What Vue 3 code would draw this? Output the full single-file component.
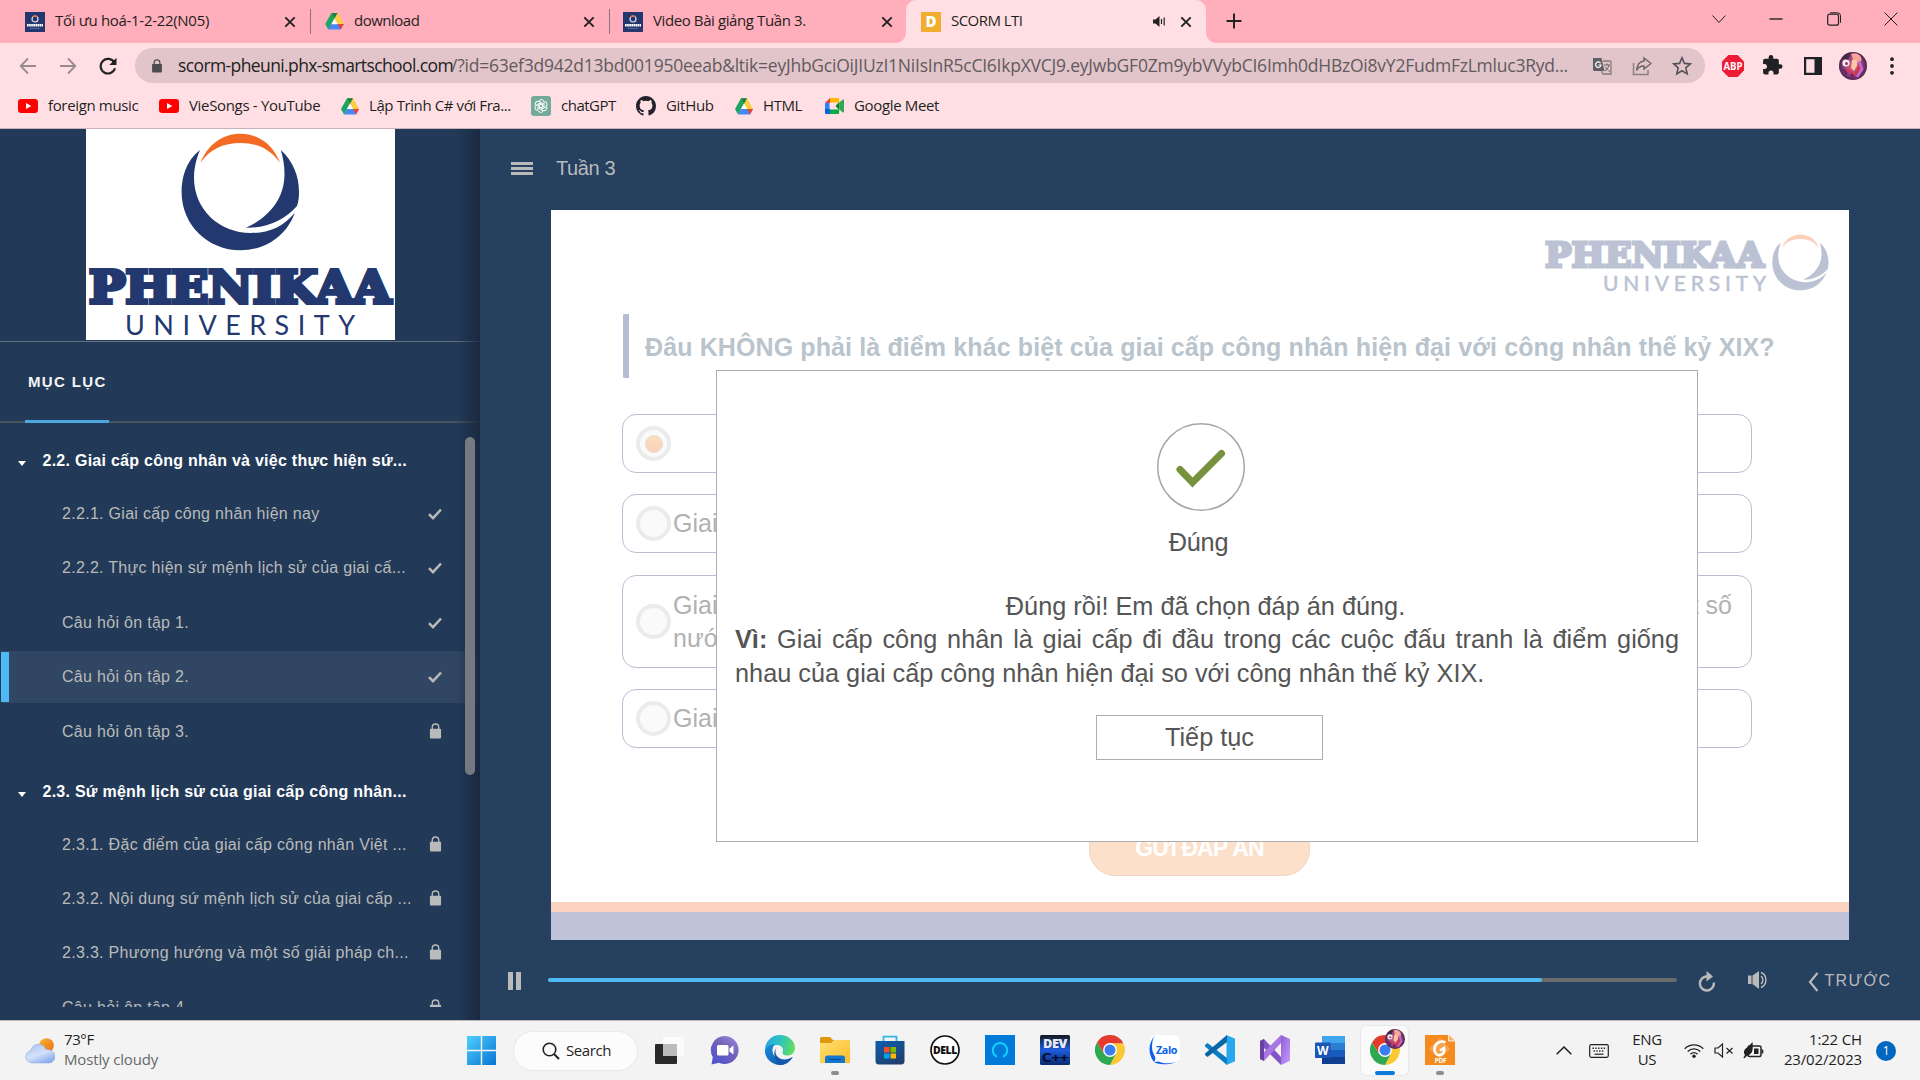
<script setup>
const tabs = [
  { title: 'Tối ưu hoá-1-2-22(N05)', icon: 'phx', cls: 't1' },
  { title: 'download', icon: 'drive', cls: 't2' },
  { title: 'Video Bài giảng Tuần 3.', icon: 'phx', cls: 't3' },
  { title: 'SCORM LTI', icon: 'd', cls: 't4', active: true },
]

const bookmarks = [
  { title: 'foreign music', icon: 'youtube', cls: 'b1' },
  { title: 'VieSongs - YouTube', icon: 'youtube', cls: 'b2' },
  { title: 'Lập Trình C# với Fra...', icon: 'drive', cls: 'b3' },
  { title: 'chatGPT', icon: 'gpt', cls: 'b4' },
  { title: 'GitHub', icon: 'github', cls: 'b5' },
  { title: 'HTML', icon: 'drive', cls: 'b6' },
  { title: 'Google Meet', icon: 'meet', cls: 'b7' },
]

const sections = [
  {
    title: '2.2. Giai cấp công nhân và việc thực hiện sứ...',
    items: [
      { title: '2.2.1. Giai cấp công nhân hiện nay', state: 'done' },
      { title: '2.2.2. Thực hiện sứ mệnh lịch sử của giai cấ...', state: 'done' },
      { title: 'Câu hỏi ôn tập 1.', state: 'done' },
      { title: 'Câu hỏi ôn tập 2.', state: 'done', current: true },
      { title: 'Câu hỏi ôn tập 3.', state: 'locked' },
    ],
  },
  {
    title: '2.3. Sứ mệnh lịch sử của giai cấp công nhân...',
    items: [
      { title: '2.3.1. Đặc điểm của giai cấp công nhân Việt ...', state: 'locked' },
      { title: '2.3.2. Nội dung sứ mệnh lịch sử của giai cấp ...', state: 'locked' },
      { title: '2.3.3. Phương hướng và một số giải pháp ch...', state: 'locked' },
      { title: 'Câu hỏi ôn tập 4.', state: 'locked' },
    ],
  },
]

const options = [
  { text: '', selected: true },
  { text: 'Giai' },
  { text: 'Giai', end: 'một số', second: 'nước' },
  { text: 'Giai' },
]

const apps = ['taskview', 'chat', 'edge', 'folder', 'store', 'dell', 'alexa', 'dev', 'chrome', 'zalo', 'vscode', 'vs', 'word', 'chromeUser', 'foxit']
</script>

<template>
  <div class="screen">
    <svg class="defs" width="0" height="0">
      <defs>
        <linearGradient id="gWin" x1="0" y1="0" x2="1" y2="1"><stop offset="0" stop-color="#4fd0fb" /><stop offset="1" stop-color="#0873d4" /></linearGradient>
        <linearGradient id="gChat" x1="1" y1="0" x2="0.3" y2="1"><stop offset="0" stop-color="#9a8fe0" /><stop offset="0.5" stop-color="#7460b8" /><stop offset="1" stop-color="#4f56cf" /></linearGradient>
        <linearGradient id="gEdge" x1="0" y1="0.3" x2="1" y2="0.5"><stop offset="0" stop-color="#2aa8e0" /><stop offset="0.5" stop-color="#2fc3c0" /><stop offset="1" stop-color="#63dd5a" /></linearGradient>
        <linearGradient id="gEdge2" x1="0" y1="0" x2="1" y2="1"><stop offset="0" stop-color="#1b8fe0" /><stop offset="1" stop-color="#0f4a9a" /></linearGradient>
        <linearGradient id="gFold" x1="0" y1="0" x2="1" y2="1"><stop offset="0" stop-color="#ffdf78" /><stop offset="1" stop-color="#fbbd23" /></linearGradient>
        <linearGradient id="gStore" x1="0" y1="0" x2="0.6" y2="1"><stop offset="0" stop-color="#0a5fb0" /><stop offset="1" stop-color="#22406f" /></linearGradient>
        <linearGradient id="gDev" x1="0" y1="0" x2="0" y2="1"><stop offset="0" stop-color="#15171f" /><stop offset="0.5" stop-color="#1f5ce0" /><stop offset="1" stop-color="#0b2a70" /></linearGradient>
        <linearGradient id="gSun" x1="0" y1="0" x2="1" y2="1"><stop offset="0" stop-color="#f4b832" /><stop offset="1" stop-color="#ee6a12" /></linearGradient>
        <linearGradient id="gCloud" x1="0" y1="0" x2="0.6" y2="1"><stop offset="0" stop-color="#a6c0f0" /><stop offset="0.6" stop-color="#d3e1fa" /><stop offset="1" stop-color="#8fb0ec" /></linearGradient>
        <linearGradient id="gVs" x1="0" y1="0" x2="1" y2="1"><stop offset="0" stop-color="#8c5fd0" /><stop offset="1" stop-color="#c99bff" /></linearGradient>
        <radialGradient id="gAv"><stop offset="0" stop-color="#e8556e" /><stop offset="0.6" stop-color="#a04a86" /><stop offset="1" stop-color="#4a2348" /></radialGradient>
        <symbol id="drive" viewBox="0 0 24 22">
          <path d="M8 0h8l-8.2 14.5L4 21.5 0 14.3z" fill="#1fa463" />
          <path d="M8 0h8l8 14.3h-8z" fill="#ffcd40" />
          <path d="M7.6 14.3H24l-4 7.2H4z" fill="#4688f4" />
          <path d="M16 14.3h8l-4 7.2z" fill="#e8433a" />
          <path d="M12 7.2L7.9 14.4h8.2z" fill="#fff" />
          <path d="M8 0h8l-4 7.2z" fill="#118045" />
        </symbol>
        <symbol id="phx" viewBox="0 0 20 20">
          <rect width="20" height="20" fill="#23376f" />
          <circle cx="10" cy="7" r="3" fill="none" stroke="#dfe3ee" stroke-width="1.2" />
          <path d="M7.6 5a3 3 0 0 1 4.8 0" fill="none" stroke="#e9692c" stroke-width="1.2" />
          <path d="M2 13.2h16" stroke="#fff" stroke-width="2.4" stroke-dasharray="1.7 .4" />
          <path d="M5 16.4h10" stroke="#8a96b8" stroke-width=".8" stroke-dasharray="1 .6" />
        </symbol>
        <symbol id="youtube" viewBox="0 0 20 14"><rect width="20" height="14" rx="3.2" fill="#fe0000" /><path d="M8 4l5.4 3L8 10z" fill="#fff" /></symbol>
        <symbol id="gpt" viewBox="0 0 20 20">
          <rect width="20" height="20" rx="3" fill="#74aa9c" />
          <g fill="none" stroke="#fff" stroke-width="1">
            <path d="M8 4.600a2.900 2.900 0 0 1 5 1.200v4.400L9.800 12" />
            <path d="M8 4.600a2.900 2.900 0 0 1 5 1.200v4.400L9.800 12" transform="rotate(60 10 10)" />
            <path d="M8 4.600a2.900 2.900 0 0 1 5 1.200v4.400L9.800 12" transform="rotate(120 10 10)" />
            <path d="M8 4.600a2.900 2.900 0 0 1 5 1.200v4.400L9.800 12" transform="rotate(180 10 10)" />
            <path d="M8 4.600a2.900 2.900 0 0 1 5 1.200v4.400L9.800 12" transform="rotate(240 10 10)" />
            <path d="M8 4.600a2.900 2.900 0 0 1 5 1.200v4.400L9.800 12" transform="rotate(300 10 10)" />
          </g>
        </symbol>
        <symbol id="github" viewBox="0 0 16 16"><path fill="#24232c" d="M8 0C3.58 0 0 3.58 0 8c0 3.54 2.29 6.53 5.47 7.59.4.07.55-.17.55-.38 0-.19-.01-.82-.01-1.49-2.01.37-2.53-.49-2.69-.94-.09-.23-.48-.94-.82-1.13-.28-.15-.68-.52-.01-.53.63-.01 1.08.58 1.23.82.72 1.21 1.87.87 2.33.66.07-.52.28-.87.51-1.07-1.78-.2-3.64-.89-3.64-3.95 0-.87.31-1.59.82-2.15-.08-.2-.36-1.02.08-2.12 0 0 .67-.21 2.2.82a7.6 7.6 0 0 1 4 0c1.53-1.04 2.2-.82 2.2-.82.44 1.1.16 1.92.08 2.12.51.56.82 1.27.82 2.15 0 3.07-1.87 3.75-3.65 3.95.29.25.54.73.54 1.48 0 1.07-.01 1.93-.01 2.2 0 .21.15.46.55.38A8 8 0 0 0 16 8c0-4.42-3.58-8-8-8z" /></symbol>
        <symbol id="meet" viewBox="0 0 19 16">
          <path d="M5 0h8a1.200 1.200 0 0 1 1.200 1.200V4.500H5z" fill="#ffba00" /><path d="M5 0v5H0z" fill="#ea4335" /><path d="M0 5h4.500v6H0z" fill="#2684fc" /><path d="M0 11h5v5H1.200A1.200 1.200 0 0 1 0 14.800z" fill="#0066da" />
          <path d="M5 11.500h9.200v3.300A1.200 1.200 0 0 1 13 16H5z" fill="#00ac47" /><path d="M10.500 8l3.700-4v8z" fill="#00832d" /><path d="M14.200 4.500L18 1.500c.5-.3 1 0 1 .5v12c0 .5-.5.800-1 .5l-3.800-3z" fill="#2fa84f" />
        </symbol>
        <symbol id="d" viewBox="0 0 20 20"><rect width="20" height="20" fill="#f0ad2e" /><text x="10" y="15.300" text-anchor="middle" font-family="Open Sans, sans-serif" font-weight="800" font-size="15" fill="#fff">D</text></symbol>
        <symbol id="x" viewBox="0 0 12 12"><path d="M1.300 1.300l9.400 9.400M10.700 1.300l-9.400 9.400" stroke="#222" stroke-width="1.900" fill="none" /></symbol>
        <symbol id="lock" viewBox="0 0 14 17"><path d="M3.500 7V4.500a3.500 3.500 0 0 1 7 0V7" fill="none" stroke="currentColor" stroke-width="1.500" /><rect x="1" y="6" width="12" height="10.500" rx="1" fill="currentColor" /></symbol>
        <symbol id="check" viewBox="0 0 14 12"><path d="M1 6.200l4 4L13 1.500" fill="none" stroke="currentColor" stroke-width="2.500" /></symbol>
        <symbol id="ring" viewBox="95 4 119 118">
          <path d="M114.400 33.700C122 15 137 4.700 154.400 4.700S187 15 194 33.700C184 20 171 14 154.400 14S124 20 114.400 33.700Z" fill="#f26a24" />
          <path d="M114 21C100 32 95.600 48 95.600 63c0 33 26.400 58.300 58.800 58.300C180 121.300 201 106 208.700 84 197 98 183 104 165 104c-32 0-57-24-57-55 0-11 3-21 6-28Z" fill="#22386f" />
          <path d="M194.800 21C207 32 213 47 213 63c0 5-.5 10-2 14-12 14-31 22.500-51 21.700C180 90 198.500 72 198.500 45c0-9-1.500-17-3.700-24Z" fill="#22386f" />
        </symbol>
        <symbol id="chrome" viewBox="0 0 30 30">
          <path d="M15 8.200H28.300A15 15 0 0 1 15 30l6-11.500z" fill="#fcc934" /><path d="M9 18.500L2 7.500 A15 15 0 0 0 15 30l6-11.500z" fill="#2da94f" />
          <path d="M15 8.200h13.300A15 15 0 0 0 2 7.500l7 11z" fill="#e33b2e" />
          <circle cx="15" cy="15" r="6.900" fill="#fff" /><circle cx="15" cy="15" r="5.500" fill="#3a7df0" />
        </symbol>
        <symbol id="avatar" viewBox="0 0 28 28">
          <circle cx="14" cy="14" r="14" fill="url(#gAv)" />
          <path d="M3 6a14 14 0 0 1 8-5.500L9 9z" fill="#472745" /><path d="M12 2c8-3 13 5 9 9l-6-1z" fill="#f3a596" />
          <circle cx="7" cy="11" r="3.600" fill="#eeeef8" /><circle cx="7.500" cy="11.500" r="1.500" fill="#a42f5c" />
          <path d="M13 8c4-1 6 2 5 6l-3 5-3-3z" fill="#f6c9a8" /><path d="M6 18l5 2 4 5 6-12" stroke="#e0313c" stroke-width="2.200" fill="none" />
          <path d="M20 9l3 8-5 8" stroke="#c16bd8" stroke-width="2.400" fill="none" /><path d="M4 17l4 5M12 22l3 4" stroke="#5b2a86" stroke-width="2.500" />
        </symbol>
      </defs>
    </svg>

    <header class="browser">
      <div class="tabstrip">
        <div v-for="t in tabs" :key="t.title" class="tab" :class="[t.cls, { active: t.active }]">
          <svg class="fav" :class="t.icon"><use :href="'#' + t.icon" /></svg>
          <span class="tab-title">{{ t.title }}</span>
          <svg v-if="t.active" class="audio" viewBox="0 0 13 11"><path d="M0 3.500h2.500L6.500 0v11l-4-3.500H0z" fill="#222" /><path d="M8.500 3v5M11.200 1.500v8" stroke="#222" stroke-width="1.200" /></svg>
          <svg class="close"><use href="#x" /></svg>
        </div>
        <svg class="newtab" viewBox="0 0 16 16"><path d="M8 .5v15M.5 8h15" stroke="#222" stroke-width="2" /></svg>
        <div class="winctl">
          <svg viewBox="0 0 14 14"><path d="M.5 3.500l6.500 7 6.500-7" /></svg>
          <svg viewBox="0 0 14 14"><path d="M.5 7h13" stroke-width="1.400" /></svg>
          <svg viewBox="0 0 14 14"><rect x=".7" y="2.200" width="10.800" height="11" rx="2" stroke-width="1.200" /><path d="M3.200 .8h7.300a3 3 0 0 1 3 3v7" /></svg>
          <svg viewBox="0 0 14 14"><path d="M.5 .5l13 13M13.500 .5l-13 13" /></svg>
        </div>
      </div>
      <div class="toolbar">
        <svg class="nav" viewBox="0 0 18 18"><path d="M17 9H2M9 1.500L1.700 9 9 16.500" stroke="#978a90" /></svg>
        <svg class="nav" viewBox="0 0 18 18"><path d="M1 9h15M9 1.500L16.300 9 9 16.500" stroke="#978a90" /></svg>
        <svg class="nav" viewBox="0 0 18 18"><path d="M15.300 5.500A7.300 7.300 0 1 0 16 11.200" stroke="#222" stroke-width="2.200" /><path d="M17.500 .8v7.200h-7.200z" fill="#222" /></svg>
        <div class="omnibox">
          <svg class="olock"><use href="#lock" /></svg>
          <span class="host">scorm-pheuni.phx-smartschool.com</span><span class="query">/?id=63ef3d942d13bd001950eeab&amp;ltik=eyJhbGciOiJIUzI1NiIsInR5cCI6IkpXVCJ9.eyJwbGF0Zm9ybVVybCI6Imh0dHBzOi8vY2FudmFzLmluc3Ryd...</span>
          <div class="oacts">
            <svg viewBox="0 0 20 20"><path d="M1 2h8.500l3 13H2.500A1.500 1.500 0 0 1 1 13.500z" fill="#5f6064" /><path d="M11 5h7a1 1 0 0 1 1 1v12h-8l-1.500-3" fill="none" stroke="#85797d" stroke-width="1.300" /><path d="M8.600 7.200A2.700 2.700 0 1 0 9 9H6.500" fill="none" stroke="#fff" stroke-width="1.200" /><path d="M12 9h6M15 7.500V9M17 9c-.5 3-2.500 5-4.500 6M13.500 11c1 2 2.500 3.500 4.500 4.500" fill="none" stroke="#6c6266" /></svg>
            <svg viewBox="0 0 20 20"><path d="M1.500 7v11.500H16V14" fill="none" stroke="#8b8084" stroke-width="1.500" /><path d="M12 2l7 5.500-7 5.500V10c-4 0-6 1.500-7.500 4.500C5 9 7.500 5.500 12 5z" fill="none" stroke="#6a6165" stroke-width="1.400" /></svg>
            <svg viewBox="0 0 20 20"><path d="M10 1.800l2.400 5.600 6 .5-4.600 4 1.400 6L10 14.700l-5.200 3.200 1.400-6-4.600-4 6-.5z" fill="none" stroke="#55515a" stroke-width="1.600" /></svg>
          </div>
        </div>
        <svg class="abp" viewBox="0 0 22 22"><path d="M6.400 0h9.200L22 6.400v9.200L15.600 22H6.400L0 15.600V6.400z" fill="#ee1b36" /><text x="11" y="14.700" text-anchor="middle" font-family="Open Sans, sans-serif" font-weight="700" font-size="10" fill="#fff" textLength="19" lengthAdjust="spacingAndGlyphs">ABP</text></svg>
        <svg class="puzzle" viewBox="0 0 22 22"><path d="M20.500 11H19V7c0-1.100-.9-2-2-2h-4V3.500a2.500 2.500 0 0 0-5 0V5H4c-1.100 0-2 .9-2 2v3.800h1.500a2.700 2.700 0 0 1 0 5.400H2V20c0 1.100.9 2 2 2h3.800v-1.500a2.700 2.700 0 0 1 5.400 0V22H17c1.100 0 2-.9 2-2v-4h1.500a2.500 2.500 0 0 0 0-5z" transform="translate(-.8 -1) scale(.97)" fill="#202124" /></svg>
        <svg class="side" viewBox="0 0 18 18"><path d="M0 0h18v18H0zM2.200 2.200v13.600h8.300V2.200z" fill="#202124" fill-rule="evenodd" /></svg>
        <svg class="ava"><use href="#avatar" /></svg>
        <svg class="dots" viewBox="0 0 4 18"><circle cx="2" cy="2.200" r="1.900" /><circle cx="2" cy="9" r="1.900" /><circle cx="2" cy="15.800" r="1.900" /></svg>
      </div>
      <nav class="bookmarks">
        <span v-for="b in bookmarks" :key="b.title" class="bm" :class="b.cls">
          <svg :class="'bi-' + b.icon"><use :href="'#' + b.icon" /></svg>
          <span>{{ b.title }}</span>
        </span>
      </nav>
    </header>

    <div class="course">
      <aside class="sidebar">
        <div class="logo-row">
          <svg class="logo" viewBox="0 0 309 211">
            <rect width="309" height="211" fill="#fff" />
            <use href="#ring" x="95" y="4" width="119" height="118" />
            <text x="3" y="173.700" class="brand" font-size="44" stroke-width="4" textLength="302" lengthAdjust="spacingAndGlyphs">PHENIKAA</text>
            <text x="39" y="206.300" class="uni" font-size="27" textLength="230">UNIVERSITY</text>
          </svg>
        </div>
        <div class="toc-tab"><span>MỤC LỤC</span></div>
        <div class="toc">
          <section v-for="s in sections" :key="s.title">
            <h3><i class="caret"></i><span>{{ s.title }}</span></h3>
            <div v-for="i in s.items" :key="i.title" class="item" :class="{ current: i.current }">
              <span>{{ i.title }}</span>
              <svg v-if="i.state === 'done'" class="ck"><use href="#check" /></svg>
              <svg v-else class="lk"><use href="#lock" /></svg>
            </div>
          </section>
        </div>
        <div class="edge-shadow"></div>
        <div class="thumb"></div>
      </aside>

      <main class="player">
        <div class="topbar">
          <i class="burger"></i>
          <span>Tuần 3</span>
        </div>
        <div class="slide">
          <div class="slide-logo">
            <svg viewBox="0 0 286 58">
              <text x="1" y="32.500" class="brand" font-size="34" stroke-width="3" textLength="219" lengthAdjust="spacingAndGlyphs">PHENIKAA</text>
              <text x="59" y="56.500" class="uni" font-size="21" stroke="#22386f" stroke-width=".6" textLength="163">UNIVERSITY</text>
              <use href="#ring" x="228" y="0" width="57" height="57" />
            </svg>
          </div>
          <h2>Đâu KHÔNG phải là điểm khác biệt của giai cấp công nhân hiện đại với công nhân thế kỷ XIX?</h2>
          <div class="options">
            <div v-for="(o, n) in options" :key="n" class="option" :class="{ tall: o.second }">
              <i class="radio"><b v-if="o.selected"></b></i>
              <div class="otext">
                <div class="oline"><span>{{ o.text }}</span><span>{{ o.end }}</span></div>
                <div v-if="o.second" class="oline">{{ o.second }}</div>
              </div>
            </div>
          </div>
          <div class="submit">GỬI ĐÁP ÁN</div>
          <div class="band"></div>

          <div class="modal">
            <svg class="ok" viewBox="0 0 90 90"><circle cx="45" cy="45" r="43.300" fill="none" stroke="#a6a6a6" stroke-width="1.500" /><path d="M24 47.500L36.500 60.500 65.500 31.500" fill="none" stroke="#76923c" stroke-width="7" stroke-linecap="round" /></svg>
            <div class="verdict">Đúng</div>
            <p class="lead">Đúng rồi! Em đã chọn đáp án đúng.</p>
            <p class="why"><b>Vì:</b> Giai cấp công nhân là giai cấp đi đầu trong các cuộc đấu tranh là điểm giống nhau của giai cấp công nhân hiện đại so với công nhân thế kỷ XIX.</p>
            <div class="continue">Tiếp tục</div>
          </div>
        </div>
        <div class="controls">
          <i class="pause"></i>
          <div class="seek"><div></div></div>
          <svg class="replay" viewBox="0 0 18 21"><path d="M15.800 11.500A7 7 0 1 1 9 5.500" fill="none" stroke="#bababa" stroke-width="2.400" /><path d="M8.500 0l6.500 5.500-6.500 5z" fill="#bababa" /></svg>
          <svg class="vol" viewBox="0 0 21 18"><path d="M0 4.500h3.500v8.500H0zM4.500 4.500L11 0v18l-6.500-5z" fill="#bababa" /><path d="M13 5c2.500 2 2.500 6 0 8M13 1.500c6.500 2.500 6.500 12.500 0 15" fill="none" stroke="#bababa" stroke-width="1.400" /></svg>
          <svg class="prev" viewBox="0 0 11 20"><path d="M9.500 1L2 10l7.500 9" fill="none" stroke="#bababa" stroke-width="2.200" /></svg>
          <span class="prev-label">TRƯỚC</span>
        </div>
      </main>
    </div>

    <footer class="taskbar">
      <div class="weather">
        <svg viewBox="0 0 30 26"><circle cx="21.500" cy="7.500" r="7.300" fill="url(#gSun)" /><path d="M6.500 25a6.300 6.300 0 0 1-.5-12.500C6.500 8.500 10 6 14 6.200c3.500.2 6 2.300 7 5.300 5-.5 9 2.500 9 7 0 4-3 6.500-6.500 6.500z" fill="url(#gCloud)" stroke="#86a6e8" stroke-width=".5" /></svg>
        <div><span class="deg">73°F</span><span class="sky">Mostly cloudy</span></div>
      </div>
      <svg class="win" viewBox="0 0 29 29"><path d="M0 0h13.800v13.800H0zM15.200 0H29v13.800H15.200zM0 15.200h13.800V29H0zM15.200 15.200H29V29H15.200z" fill="url(#gWin)" /></svg>
      <div class="search">
        <svg viewBox="0 0 18 18"><circle cx="7.500" cy="7.500" r="6.300" fill="none" stroke="#222" stroke-width="1.600" /><path d="M12 12l5 5" stroke="#222" stroke-width="1.900" /></svg>
        <span>Search</span>
      </div>
      <div class="apps">
        <div v-for="a in apps" :key="a" class="app" :class="a">
          <svg viewBox="0 0 30 30">
            <template v-if="a === 'taskview'"><rect x="0" y="9" width="22" height="20" rx="1" fill="#2a2a2a" /><rect x="8" y="2" width="21" height="19" fill="#fbfbfb" opacity=".95" /><rect x="8" y="9" width="14" height="12" fill="#bcbcbc" /></template>
            <template v-else-if="a === 'chat'"><path d="M15 1a14 14 0 1 1-6 26.800L1.500 29.500 2.800 22A14 14 0 0 1 15 1z" fill="url(#gChat)" /><rect x="7" y="10" width="11.500" height="10.500" rx="1.500" fill="#fff" /><path d="M19.500 13.500l4-3v9l-4-3z" fill="#fff" /></template>
            <template v-else-if="a === 'edge'"><path d="M0 15C0 6 7 0 15 0c8.500 0 15 6 15 13 0 5-4 7.500-8 7.500-3.500 0-5-1.500-4.500-3C19 14 17 10 12 10 6 10 1 15 0 20z" fill="url(#gEdge)" /><path d="M0 16C1 11 5.500 9 10 9.500c-4 3-3 10 1 13.500 4 3.300 11 3 16-1-2.500 5-7 8-12 8C7 30 0 23.500 0 16z" fill="url(#gEdge2)" /><path d="M12 12.500c-3 3-1.500 9 3 11 4 1.800 9 1 13-1.500-3 5-8 8-13 8-5.500-3-8-14-3-17.500z" fill="#1458ad" /></template>
            <template v-else-if="a === 'folder'"><path d="M0 3.500A1.500 1.500 0 0 1 1.500 2H10l3 3h15.500A1.500 1.500 0 0 1 30 6.500V14H0z" fill="#dd9a0c" /><path d="M0 8h11l3-3h15a1 1 0 0 1 1 1v22H0z" fill="url(#gFold)" /><path d="M5 28v-5a2.500 2.500 0 0 1 2.500-2.500h15A2.500 2.500 0 0 1 25 23v5z" fill="#1576cd" /><path d="M9 24.500h12" stroke="#0b4b94" stroke-width="1.200" /></template>
            <template v-else-if="a === 'store'"><path d="M8.500 7V1.700h13V7" fill="none" stroke="#36b5ea" stroke-width="1.800" /><path d="M.5 6h29v20a3.500 3.500 0 0 1-3.500 3.500H4A3.500 3.500 0 0 1 .5 26z" fill="url(#gStore)" /><path d="M9 12h5.500v5.500H9z" fill="#f25022" /><path d="M15.500 12H21v5.500h-5.500z" fill="#7fba00" /><path d="M9 18.500h5.500v5H9z" fill="#00a4ef" /><path d="M15.500 18.500H21v5h-5.500z" fill="#ffb900" /></template>
            <template v-else-if="a === 'dell'"><circle cx="15" cy="15" r="14" fill="#fff" stroke="#111" stroke-width="1.700" /><text x="15" y="18.700" text-anchor="middle" textLength="24" lengthAdjust="spacingAndGlyphs" font-family="Open Sans, sans-serif" font-weight="800" font-size="10" fill="#111">DELL</text></template>
            <template v-else-if="a === 'alexa'"><rect width="30" height="30" fill="#007ad9" /><path d="M12 21.800A7.200 7.200 0 1 1 18 21.800" fill="none" stroke="#10cfff" stroke-width="2" /></template>
            <template v-else-if="a === 'dev'"><rect width="30" height="30" rx="1.500" fill="url(#gDev)" /><text x="15" y="13" text-anchor="middle" textLength="24" lengthAdjust="spacingAndGlyphs" font-family="Open Sans, sans-serif" font-weight="800" font-size="12" fill="#e8ebf5">DEV</text><text x="15" y="27" text-anchor="middle" textLength="27" lengthAdjust="spacingAndGlyphs" font-family="Open Sans, sans-serif" font-weight="700" font-size="13" fill="#050d2c">C++</text></template>
            <use v-else-if="a === 'chrome'" href="#chrome" />
            <template v-else-if="a === 'zalo'"><path d="M6 0h17a7 7 0 0 1 7 7v15a7 7 0 0 1-7 7H9l-6-1.500L0 22V6a6 6 0 0 1 6-6z" fill="#fff" /><path d="M5 .5C-2 8-2 19 3.500 26.500 5 29.500 22 31.500 29 25c-3 3.500-16 4.500-20 1.500l-5 .5C8 22 2 20 2 12 2 7 3 3 5 .5z" fill="#0f5fe8" /><text x="16.500" y="18.500" text-anchor="middle" textLength="21" lengthAdjust="spacingAndGlyphs" font-family="Open Sans, sans-serif" font-weight="700" font-size="10" fill="#0a63e8">Zalo</text></template>
            <template v-else-if="a === 'vscode'"><path d="M21.500 0L30 3.800v22.400L21.500 30z" fill="#26a8ee" /><path d="M0 10l2.500-2L22 23v7L0 11.500z" fill="#0c7cc4" /><path d="M0 20l2.500 2L22 7V0L0 18.500z" fill="#0868a8" /></template>
            <template v-else-if="a === 'vs'"><path d="M21 0l9 4v22l-9 4z" fill="url(#gVs)" /><path d="M0 6l4-2 17 18v8L2 11z" fill="#8354c6" /><path d="M0 24l4 2L21 8V0L2 19z" fill="#a877e2" /><path d="M0 6l4-2v22l-4-2z" fill="#6a3fa8" /></template>
            <template v-else-if="a === 'word'"><rect x="7" y="1" width="23" height="7.500" fill="#41a5ee" /><rect x="7" y="8" width="23" height="7" fill="#2b7cd3" /><rect x="7" y="15" width="23" height="7" fill="#185abd" /><rect x="7" y="22" width="23" height="7" fill="#103f91" /><rect x="0" y="7.500" width="15.500" height="15.500" rx="1" fill="#1b55b5" /><text x="7.700" y="19.500" text-anchor="middle" font-family="Open Sans, sans-serif" font-weight="700" font-size="12" fill="#fff">W</text></template>
            <template v-else-if="a === 'chromeUser'"><use href="#chrome" /></template>
            <template v-else><path d="M0 0h23.500L30 6v24H0z" fill="#f58a1f" /><path d="M23.500 0v6H30" fill="#f9b56c" stroke="#fff" stroke-width=".8" /><path d="M15 3l10 11-10 10L4 14z" fill="#f9a44e" /><path d="M20.500 7.500c-4-2.500-10 0-11 5.500-.8 4.500 2.500 8 6 7 3-.8 4.500-4 3.500-7l-4 2.500" fill="none" stroke="#fff" stroke-width="2.600" /><text x="15.500" y="28.300" text-anchor="middle" font-family="Open Sans, sans-serif" font-weight="700" font-size="6.500" fill="#fff">PDF</text></template>
          </svg>
          <svg v-if="a === 'chromeUser'" class="mini"><use href="#avatar" /></svg>
        </div>
      </div>
      <div class="tray">
        <svg class="up" viewBox="0 0 16 9"><path d="M.7 8.300L8 1l7.300 7.300" fill="none" stroke="#222" stroke-width="1.500" /></svg>
        <svg class="kbd" viewBox="0 0 20 14"><rect x=".7" y=".7" width="18.600" height="12.600" rx="1.500" fill="none" stroke="#222" stroke-width="1.200" /><path d="M3.500 4.200h13M4.500 7h11" stroke="#222" stroke-width="1.400" stroke-dasharray="1.400 1.400" /><path d="M5.500 10.200h9" stroke="#222" stroke-width="1.200" /></svg>
        <div class="lang"><span>ENG</span><span>US</span></div>
        <svg class="wifi" viewBox="0 0 20 15"><g fill="none" stroke="#222" stroke-width="1.300"><path d="M.7 5.700a13 13 0 0 1 18.600 0M3.700 8.500a9 9 0 0 1 12.600 0M6.500 11.200a5 5 0 0 1 7 0" /></g><circle cx="10" cy="13.200" r="1.700" fill="#222" /></svg>
        <svg class="mute" viewBox="0 0 20 15"><path d="M1 5h3l4.500-4v13L4 10H1z" fill="none" stroke="#222" stroke-width="1.200" /><path d="M12.500 5l6 5.500M18.500 5l-6 5.500" stroke="#222" stroke-width="1.200" /></svg>
        <svg class="bat" viewBox="0 0 22 17"><rect x="6" y="4" width="13" height="10.500" rx="1.500" fill="none" stroke="#222" stroke-width="1.500" /><rect x="12" y="6.500" width="4.500" height="5.500" fill="#222" /><path d="M20.500 7.500v4" stroke="#222" stroke-width="1.500" /><path d="M10.500 0c.5 6 1 12-5 13.500L2 16.500l-.5-1L3 13C0 9 4 6 6.500 4.500z" fill="#222" /></svg>
        <div class="clock"><span>1:22 CH</span><span>23/02/2023</span></div>
        <div class="badge">1</div>
      </div>
    </footer>
  </div>
</template>

<style>
html, body { overflow: hidden; }
</style>

<style scoped>
* { box-sizing: border-box; }
.screen { width: 1920px; height: 1080px; overflow: hidden; display: flex; flex-direction: column; font-family: "Open Sans", "Noto Sans", sans-serif; color: #1f1f1f; white-space: nowrap; }
.defs { position: absolute; }
svg { display: block; flex: none; }

.browser { height: 129px; flex: none; background: #ffdfe4; border-bottom: 1px solid #c9b1ba; }
.tabstrip { height: 43px; background: #ffaebc; display: flex; align-items: stretch; }
.tab { position: relative; display: flex; align-items: center; font-size: 15px; padding-right: 14px; }
.tab::after { content: ""; position: absolute; right: -1px; top: 9px; width: 1px; height: 25px; background: #93717c; }
.t1 { width: 310px; padding-left: 25px; }
.t2 { width: 299px; padding-left: 15px; }
.t3 { width: 297px; padding-left: 14px; padding-right: 13px; }
.t3::after, .t4::after { display: none; }
.t4 { width: 300px; padding-left: 15px; }
.tab.active { background: #ffdfe4; border-radius: 10px 10px 0 0; }
.tab.active::before { content: ""; position: absolute; left: -10px; right: -10px; bottom: 0; height: 10px; background: radial-gradient(circle at 0 0, transparent 9.5px, #ffdfe4 10px) left / 10px 10px no-repeat, radial-gradient(circle at 100% 0, transparent 9.5px, #ffdfe4 10px) right / 10px 10px no-repeat; }
.fav { width: 20px; height: 20px; margin-right: 10px; }
.fav.drive { width: 19px; height: 17px; margin-right: 10px; }
.tab-title { flex: 1; line-height: 20px; margin-top: -4px; }
.t1 .tab-title { letter-spacing: -.3px; }
.t2 .tab-title { letter-spacing: -.5px; }
.t3 .tab-title { letter-spacing: -.4px; }
.t4 .tab-title { letter-spacing: -.55px; }
.audio { width: 13px; height: 11px; margin-right: 14px; }
.close { width: 12px; height: 12px; }
.newtab { width: 16px; height: 16px; margin: 13px 0 0 20px; }
.winctl { margin-left: auto; display: flex; gap: 43.300px; padding: 12px 22px 0 0; }
.winctl svg { width: 14px; height: 14px; fill: none; stroke: #222; stroke-width: 1; }

.toolbar { height: 45px; display: flex; align-items: center; padding-left: 19px; }
.nav { width: 18px; height: 18px; margin-right: 22px; fill: none; stroke-width: 1.800; }
.nav:nth-child(3) { margin-right: 18px; }
.omnibox { width: 1570px; height: 35px; border-radius: 18px; background: #e1c5ca; display: flex; align-items: center; padding-left: 16px; font-size: 17.500px; }
.olock { width: 12px; height: 14px; color: #4c4d52; margin-right: 15px; }
.host, .query { line-height: 24px; margin-top: -2px; }
.host { width: 273px; letter-spacing: -.61px; color: #222; }
.query { letter-spacing: -.23px; color: #635a5e; width: 1116px; }
.oacts { display: flex; gap: 20px; margin-left: 25px; }
.oacts svg { width: 20px; height: 20px; }
.abp { width: 22px; height: 22px; margin-left: 17px; }
.puzzle { width: 21px; height: 21px; margin-left: 18px; }
.side { width: 18px; height: 18px; margin-left: 21px; }
.ava { width: 28px; height: 28px; margin-left: 17px; }
.dots { width: 4px; height: 18px; margin-left: 23px; fill: #222; }

.bookmarks { height: 40px; display: flex; align-items: center; padding-left: 18px; font-size: 15px; margin-top: -2px; }
.bm { display: flex; align-items: center; gap: 10px; flex: none; }
.bm > span { margin-top: -2px; }
.bi-youtube { width: 20px; height: 14px; }
.bi-drive { width: 18px; height: 17px; }
.bi-gpt, .bi-github { width: 20px; height: 20px; }
.bi-meet { width: 19px; height: 16px; }
.b1 { width: 141px; letter-spacing: -.35px; }
.b2 { width: 182px; letter-spacing: -.33px; }
.b3 { width: 190px; letter-spacing: -.4px; }
.b4 { width: 105px; letter-spacing: -.5px; }
.b5 { width: 99px; letter-spacing: -.3px; }
.b6 { width: 90px; letter-spacing: -.4px; }
.b7 { letter-spacing: -.35px; }

.course { height: 891px; flex: none; display: flex; font-family: "Liberation Sans", Arial, sans-serif; }
.sidebar { position: relative; width: 480px; background: #223a58; display: flex; flex-direction: column; }
.logo-row { height: 213px; padding-left: 86px; border-bottom: 1px solid #66717f; }
.logo { width: 309px; height: 211px; }
.brand { font-family: "DejaVu Serif", serif; font-weight: 700; fill: #22386f; stroke: #22386f; }
.uni { font-family: Lato, sans-serif; fill: #22386f; }
.toc-tab { height: 81px; border-bottom: 2px solid #47535f; padding-left: 25px; display: flex; }
.toc-tab span { width: 84px; height: 81px; padding-left: 3px; border-bottom: 3px solid #4ba7dc; font-size: 15px; font-weight: 700; letter-spacing: 1.350px; line-height: 79px; color: #f4f5f7; }
.toc { height: 584px; padding-top: 12px; overflow: hidden; }
.toc h3 { height: 52px; margin: 0 0 1px; display: flex; align-items: center; font-size: 16px; font-weight: 700; color: #fff; letter-spacing: .26px; }
.toc section + section h3 { margin-top: 8px; }
.caret { width: 0; height: 0; border: 4.500px solid transparent; border-top: 5px solid #fff; border-bottom: 0; margin: 5px 17px 0 17.500px; }
.item { position: relative; height: 52px; margin: 0 2px 2.400px 1px; display: flex; align-items: center; justify-content: space-between; padding: 0 36px 0 61px; font-size: 16px; letter-spacing: .3px; color: #bababa; }
.item.current { background: #304662; }
.item.current::before { content: ""; position: absolute; left: 0; top: 1px; width: 8px; height: 50px; background: #4dbaf5; }
.ck { width: 14px; height: 12px; }
.lk { width: 13px; height: 16px; margin-top: -2px; }
.edge-shadow { position: absolute; right: 0; top: 0; bottom: 0; width: 24px; background: linear-gradient(to right, rgba(25, 38, 60, 0), rgba(25, 38, 60, .85)); }
.thumb { position: absolute; left: 465px; top: 308px; width: 10px; height: 338px; border-radius: 5px; background: #747a7f; }

.player { flex: 1; background: #264060; display: flex; flex-direction: column; }
.topbar { height: 81px; display: flex; align-items: center; padding: 0 0 2px 31px; font-size: 20px; letter-spacing: -.4px; color: #bababa; }
.burger { width: 22px; height: 13px; margin-right: 23px; background: linear-gradient(#bababa 3px, transparent 3px 5px, #bababa 5px 8px, transparent 8px 10px, #bababa 10px); }
.slide { position: relative; width: 1298px; height: 730px; margin-left: 71px; background: #fff; flex: none; display: flex; flex-direction: column; }
.slide-logo { padding: 24px 0 0 993px; opacity: .3; height: 104px; }
.slide-logo svg { width: 286px; height: 58px; }
.slide h2 { margin: 0 0 36px 72px; height: 64px; border-left: 6px solid #b5bdd3; border-radius: 1px; padding-left: 16px; font-size: 25px; line-height: 66px; font-weight: 700; color: #b9c4cc; letter-spacing: .115px; }
.options { display: flex; flex-direction: column; gap: 21px; padding-left: 71px; width: 1201px; }
.option { height: 59px; border: 1.500px solid #b9c0d6; border-radius: 14px; display: flex; align-items: center; padding: 0 19px 0 13px; }
.option.tall { height: 93px; margin-top: 1px; }
.radio { width: 35px; height: 35px; border-radius: 50%; border: 4px solid #ebebeb; background: #fafafa; display: flex; align-items: center; justify-content: center; flex: none; }
.radio b { width: 18px; height: 18px; border-radius: 50%; background: linear-gradient(#fbdfbd, #fbd0b8); border: 1px solid #e3dcd6; }
.otext { flex: 1; font-size: 25px; line-height: 33px; color: #b1b1b1; margin-left: 2px; }
.oline { display: flex; justify-content: space-between; }
.submit { position: absolute; left: 538px; top: 610px; width: 221px; height: 56px; border-radius: 26px; background: #fde0c9; border: 1px solid #f1d6c4; color: #fff; font-weight: 700; font-size: 23px; line-height: 54px; text-align: center; letter-spacing: -.9px; }
.band { margin-top: auto; height: 38px; border-top: 10px solid #fbd1bf; background: #bfc4d8; }
.modal { position: absolute; left: 165px; top: 160px; width: 982px; height: 472px; background: #fff; border: 1.500px solid #adadad; display: flex; flex-direction: column; align-items: center; color: #555; font-size: 25.300px; }
.ok { width: 90px; height: 90px; margin: 50.500px 0 0 -12px; }
.verdict { margin: 13px 0 0 -17px; line-height: 34px; letter-spacing: -.2px; }
.modal p { margin: 0; width: 944px; line-height: 33px; }
.modal .lead { margin-top: 31px; text-align: center; padding-right: 3px; }
.modal .why { white-space: normal; text-align: justify; margin-top: -1px; line-height: 34px; }
.continue { margin: 25px 0 0 5px; width: 227px; height: 45px; border: 1.500px solid #adadad; line-height: 42px; text-align: center; }

.controls { flex: 1; display: flex; align-items: center; }
.pause { width: 13px; height: 18px; border: solid #bababa; border-width: 0 5px; margin: 2px 26.500px 0 28px; }
.seek { width: 1129px; height: 4px; background: #6b6b6b; border-radius: 2px; }
.seek div { width: 994px; height: 4px; background: #4dbaf5; border-radius: 2px; }
.replay { width: 18px; height: 21px; margin: 2px 0 0 21px; }
.vol { width: 21px; height: 18px; margin-left: 32px; }
.prev { width: 11px; height: 20px; margin: 3px 0 0 39px; }
.prev-label { font-size: 16px; letter-spacing: 1.300px; color: #bababa; margin: 2px 0 0 6px; }

.taskbar { height: 60px; flex: none; background: #f3f3f3; border-top: 1px solid #bfb8bb; display: flex; align-items: center; font-size: 15px; letter-spacing: -.4px; padding-left: 25px; }
.weather { display: flex; align-items: center; width: 442px; }
.weather svg { width: 30px; height: 26px; margin-right: 9px; }
.weather span { display: block; line-height: 20px; position: relative; top: -2px; }
.weather .sky { color: #686868; letter-spacing: -.15px; }
.win { width: 29px; height: 29px; }
.search { width: 123px; height: 38px; margin-left: 18px; border-radius: 19px; background: #fcfcfc; box-shadow: 0 0 1px 1px #e9e9e9; display: flex; align-items: center; padding-left: 28px; gap: 6px; }
.search svg { width: 18px; height: 18px; }
.search span { margin-top: -2px; }
.apps { display: flex; margin-left: 5px; }
.app { position: relative; width: 55px; height: 50px; display: flex; align-items: center; justify-content: center; }
.app > svg { width: 30px; height: 30px; overflow: visible; margin-top: -1px; }
.folder::after, .foxit::after { content: ""; position: absolute; bottom: 1px; left: 24px; width: 8px; height: 4px; border-radius: 2px; background: #8c8c8c; }
.chromeUser::before { content: ""; position: absolute; left: 4px; top: 0; width: 47px; height: 49px; border-radius: 5px; background: #fafafa; box-shadow: 0 0 1px 1px #e8e8e8; }
.chromeUser::after { content: ""; position: absolute; bottom: 1px; left: 18px; width: 20px; height: 4px; border-radius: 2px; background: #0f7bd8; }
.chromeUser > svg { position: relative; }
.chromeUser .mini { position: absolute; width: 20px; height: 20px; left: 28px; top: 4px; }
.tray { display: flex; align-items: center; }
.up { width: 16px; height: 9px; margin-left: 89px; }
.kbd { width: 20px; height: 14px; margin-left: 17px; }
.lang { width: 30px; margin: -3px 0 0 23px; text-align: center; }
.lang span, .clock span { display: block; line-height: 20px; }
.wifi { width: 20px; height: 15px; margin-left: 22px; }
.mute { width: 20px; height: 15px; margin-left: 10px; }
.bat { width: 22px; height: 17px; margin-left: 8px; }
.clock { width: 90px; margin: -4px 0 0 8px; text-align: right; letter-spacing: -.15px; }
.badge { width: 20px; height: 20px; border-radius: 50%; background: #0067c0; color: #fff; font-size: 12px; line-height: 20px; text-align: center; margin-left: 14px; }
</style>
